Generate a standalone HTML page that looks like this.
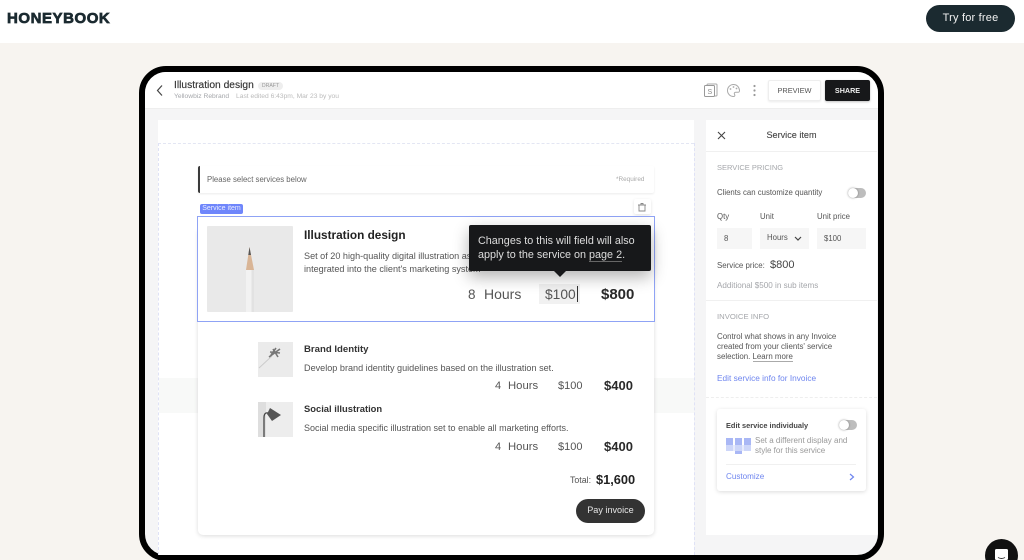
<!DOCTYPE html>
<html><head><meta charset="utf-8">
<style>
*{box-sizing:border-box;margin:0;padding:0}
html,body{width:1024px;height:560px;overflow:hidden;background:#f7f4f0;font-family:"Liberation Sans",sans-serif}
#root{position:relative;width:1024px;height:560px;overflow:hidden;background:#f7f4f0;filter:blur(.25px)}
.a{position:absolute;white-space:nowrap}
#top{left:0;top:0;width:1024px;height:43px;background:#fff}
#frame{left:139px;top:66px;width:745px;height:495px;border:6px solid #000;border-radius:27px;background:#f5f5f6;overflow:hidden}
.g{color:#555}
.l{color:#a5a7ab}
.b{color:#6f86ef}
</style></head><body>
<div id="root">
<div class="a" id="top"></div>
<div class="a" style="left:7px;top:9px;font-size:15px;line-height:20px;font-weight:bold;color:#1b2a30;letter-spacing:.55px;-webkit-text-stroke:.7px #1b2a30">HONEYBOOK</div>
<div class="a" style="left:926px;top:5px;width:89px;height:27px;border-radius:14px;background:#1b2a30;color:#f2f2f2;font-size:11px;line-height:27px;text-align:center;letter-spacing:.2px">Try for free</div>

<div class="a" id="frame"></div>
<!-- app header -->
<div class="a" style="left:145px;top:72px;width:733px;height:37px;background:#fff;border-radius:21px 21px 0 0;border-bottom:1px solid #eee"></div>
<svg class="a" style="left:155px;top:84px" width="10" height="13"><path d="M7 1.500L2.500 6.500L7 11.500" fill="none" stroke="#444" stroke-width="1.200"/></svg>
<div class="a" style="left:174px;top:79px;font-size:10.250px;line-height:13px;color:#333;-webkit-text-stroke:.15px #333">Illustration design</div>
<div class="a" style="left:258px;top:82px;width:25px;height:8px;border-radius:4px;background:#eee;color:#999;font-size:5.200px;line-height:8px;text-align:center">DRAFT</div>
<div class="a l" style="left:174px;top:92px;font-size:6.700px;line-height:9px">Yellowbiz Rebrand</div>
<div class="a" style="left:236px;top:92px;font-size:6.700px;line-height:9px;color:#bbb">Last edited 6:43pm, Mar 23 by you</div>
<svg class="a" style="left:703px;top:83px" width="16" height="15"><rect x="4" y="1" width="10" height="12" rx="1" fill="#fff" stroke="#aaa"/><rect x="1.500" y="2.500" width="10" height="11" rx="1" fill="#fff" stroke="#999"/><text x="4.500" y="11" font-size="7" fill="#888" font-family="Liberation Sans">S</text></svg>
<svg class="a" style="left:726px;top:83px" width="15" height="15"><path d="M7.500 1.500a6 6 0 1 0 0 12c1.600 0 1.600-1.300 1-2.200-.6-1 0-2 1.200-2H12c1.100 0 1.700-.8 1.500-2.100C13 3.500 10.500 1.500 7.500 1.500z" fill="#fff" stroke="#aaa"/><circle cx="4.500" cy="6" r=".9" fill="#aaa"/><circle cx="7.500" cy="4" r=".9" fill="#aaa"/><circle cx="10.500" cy="5.500" r=".9" fill="#aaa"/></svg>
<svg class="a" style="left:752px;top:84px" width="5" height="13"><circle cx="2.500" cy="2" r="1.100" fill="#999"/><circle cx="2.500" cy="6.500" r="1.100" fill="#999"/><circle cx="2.500" cy="11" r="1.100" fill="#999"/></svg>
<div class="a" style="left:768px;top:80px;width:53px;height:21px;background:#fff;border:1px solid #eee;border-radius:2px;box-shadow:0 1px 2px rgba(0,0,0,.08);color:#555;font-size:7.400px;line-height:19px;text-align:center">PREVIEW</div>
<div class="a" style="left:825px;top:80px;width:45px;height:21px;background:#17181a;border-radius:2px;box-shadow:0 1px 2px rgba(0,0,0,.25);color:#eee;font-size:7.200px;font-weight:bold;line-height:21px;text-align:center">SHARE</div>

<!-- page panel -->
<div class="a" style="left:158px;top:120px;width:536px;height:435px;background:#fff"></div>
<div class="a" style="left:158px;top:143px;width:536px;border-top:1px dashed #e3e6f3"></div>
<div class="a" style="left:158px;top:143px;height:412px;border-left:1px dashed #dfe2f6"></div>
<div class="a" style="left:694px;top:143px;height:412px;border-left:1px dashed #dfe2f6"></div>
<div class="a" style="left:159px;top:378px;width:535px;height:35px;background:#f8f9f8"></div>

<!-- select bar -->
<div class="a" style="left:198px;top:166px;width:456px;height:27px;background:#fff;border-left:2px solid #3a3a3a;border-radius:2px;box-shadow:0 1px 2px rgba(0,0,0,.08)"></div>
<div class="a" style="left:207px;top:174px;font-size:7.800px;line-height:11px;color:#666">Please select services below</div>
<div class="a" style="left:616px;top:175px;font-size:6.400px;line-height:9px;color:#aaa">*Required</div>

<div class="a" style="left:200px;top:204px;width:43px;height:10px;background:#6f86fb;border-radius:2px;color:#e8ecff;font-size:7px;line-height:10px;text-align:center">Service item</div>
<div class="a" style="left:634px;top:199px;width:17px;height:15px;background:#fff;border-radius:2px;box-shadow:0 1px 3px rgba(0,0,0,.12)"></div>
<svg class="a" style="left:637px;top:202px" width="10" height="10"><path d="M2 3h6v6H2zM1 3h8M4 3V1.500h2V3" fill="none" stroke="#888" stroke-width=".9"/></svg>

<!-- card -->
<div class="a" style="left:198px;top:230px;width:456px;height:305px;background:#fff;border-radius:0 0 5px 5px;box-shadow:0 1px 4px rgba(0,0,0,.14)"></div>
<div class="a" style="left:197px;top:216px;width:458px;height:106px;background:#fff;border:1px solid #8fa3f5"></div>
<svg class="a" style="left:207px;top:226px" width="86" height="86"><rect width="86" height="86" fill="#e9e9e9" rx="1"/><rect x="39" y="44" width="8" height="42" fill="#f2f2f2"/><rect x="44.500" y="44" width="2.500" height="42" fill="#e2e2e2"/><path d="M39 44L42.500 21L47 44z" fill="#d9b596"/><path d="M41.300 29L42.500 21L44 29z" fill="#555"/></svg>
<div class="a" style="left:304px;top:228px;font-size:11.800px;line-height:14px;font-weight:bold;color:#222">Illustration design</div>
<div class="a g" style="left:304px;top:250px;font-size:9.100px;line-height:13px">Set of 20 high-quality digital illustration as</div>
<div class="a g" style="left:304px;top:263px;font-size:9.100px;line-height:13px">integrated into the client's marketing system</div>
<div class="a g" style="left:468px;top:287px;font-size:13.500px;line-height:15px">8</div>
<div class="a g" style="left:484px;top:287px;font-size:14px;line-height:15px">Hours</div>
<div class="a" style="left:539px;top:284px;width:41px;height:20px;background:#f1f1f1"></div>
<div class="a g" style="left:545px;top:287px;font-size:13.800px;line-height:15px">$100</div>
<div class="a" style="left:577px;top:286px;width:1px;height:16px;background:#333"></div>
<div class="a" style="left:601px;top:287px;font-size:15px;line-height:15px;font-weight:bold;color:#2a2a2a">$800</div>

<!-- tooltip -->
<div class="a" style="left:469px;top:225px;width:182px;height:46px;background:#17181a;border-radius:2px;box-shadow:0 6px 16px rgba(0,0,0,.3)"></div>
<div class="a" style="left:554px;top:271px;width:0;height:0;border-left:6px solid transparent;border-right:6px solid transparent;border-top:6px solid #17181a"></div>
<div class="a" style="left:478px;top:234px;font-size:10.800px;line-height:14px;color:#ddd">Changes to this will field will also<br>apply to the service on <span style="border-bottom:1px solid #666">page 2</span>.</div>

<!-- sub items -->
<svg class="a" style="left:258px;top:342px" width="35" height="35"><rect width="35" height="35" fill="#ebebeb"/><path d="M1 26L14 14" stroke="#ccc" fill="none"/><path d="M11 15L22 7M12 10L22 11M15 7L20 15M13 13L18 6" stroke="#777" stroke-width="1.600" fill="none"/></svg>
<div class="a" style="left:304px;top:344px;font-size:9.600px;line-height:12px;font-weight:bold;color:#333">Brand Identity</div>
<div class="a g" style="left:304px;top:362px;font-size:9.100px;line-height:12px">Develop brand identity guidelines based on the illustration set.</div>
<div class="a g" style="left:495px;top:379px;font-size:11px;line-height:14px">4</div>
<div class="a g" style="left:508px;top:379px;font-size:11.300px;line-height:14px">Hours</div>
<div class="a g" style="left:558px;top:379px;font-size:11px;line-height:14px">$100</div>
<div class="a" style="left:604px;top:379px;font-size:13px;line-height:14px;font-weight:bold;color:#2a2a2a">$400</div>

<svg class="a" style="left:258px;top:402px" width="35" height="35"><rect width="35" height="35" fill="#ededed"/><rect width="8" height="35" fill="#dedede"/><path d="M6 35V16Q6 10 10 11" stroke="#444" stroke-width="1.300" fill="none"/><path d="M12 6L23 13L14 19L9 12z" fill="#555"/></svg>
<div class="a" style="left:304px;top:403px;font-size:9.400px;line-height:12px;font-weight:bold;color:#333">Social illustration</div>
<div class="a g" style="left:304px;top:422px;font-size:9px;line-height:12px">Social media specific illustration set to enable all marketing efforts.</div>
<div class="a g" style="left:495px;top:440px;font-size:11px;line-height:14px">4</div>
<div class="a g" style="left:508px;top:440px;font-size:11.300px;line-height:14px">Hours</div>
<div class="a g" style="left:558px;top:440px;font-size:11px;line-height:14px">$100</div>
<div class="a" style="left:604px;top:440px;font-size:13px;line-height:14px;font-weight:bold;color:#2a2a2a">$400</div>

<div class="a g" style="left:570px;top:474px;font-size:8.800px;line-height:12px">Total:</div>
<div class="a" style="left:596px;top:473px;font-size:12.800px;line-height:14px;font-weight:bold;color:#222">$1,600</div>
<div class="a" style="left:576px;top:499px;width:69px;height:24px;border-radius:12px;background:#333;color:#e6e6e6;font-size:9.100px;line-height:23px;text-align:center">Pay invoice</div>

<!-- right panel -->
<div class="a" style="left:706px;top:120px;width:171px;height:415px;background:#fff"></div>
<svg class="a" style="left:717px;top:131px" width="9" height="9"><path d="M1 1L8 8M8 1L1 8" stroke="#444" stroke-width="1.100"/></svg>
<div class="a" style="left:706px;top:130px;width:171px;text-align:center;font-size:9.100px;line-height:11px;color:#444;-webkit-text-stroke:.1px #444">Service item</div>
<div class="a" style="left:706px;top:151px;width:171px;border-top:1px solid #f0f0f0"></div>
<div class="a l" style="left:717px;top:163px;font-size:7.500px;line-height:10px">SERVICE PRICING</div>
<div class="a g" style="left:717px;top:188px;font-size:7.800px;line-height:10px">Clients can customize quantity</div>
<div class="a" style="left:848px;top:188px;width:18px;height:10px;border-radius:5px;background:#bdbdbd"></div>
<div class="a" style="left:848px;top:188px;width:10px;height:10px;border-radius:5px;background:#fff;box-shadow:0 0 2px rgba(0,0,0,.4)"></div>
<div class="a g" style="left:717px;top:212px;font-size:7.800px;line-height:10px">Qty</div>
<div class="a g" style="left:760px;top:212px;font-size:7.800px;line-height:10px">Unit</div>
<div class="a g" style="left:817px;top:212px;font-size:7.800px;line-height:10px">Unit price</div>
<div class="a" style="left:717px;top:228px;width:35px;height:21px;background:#f6f6f6"></div>
<div class="a" style="left:760px;top:228px;width:49px;height:21px;background:#f6f6f6"></div>
<div class="a" style="left:817px;top:228px;width:49px;height:21px;background:#f6f6f6"></div>
<div class="a g" style="left:724px;top:233px;font-size:7.800px;line-height:11px">8</div>
<div class="a g" style="left:767px;top:232px;font-size:7.800px;line-height:11px">Hours</div>
<svg class="a" style="left:794px;top:236px" width="8" height="6"><path d="M1 1L4 4L7 1" fill="none" stroke="#444" stroke-width="1.200"/></svg>
<div class="a g" style="left:824px;top:233px;font-size:7.800px;line-height:11px">$100</div>
<div class="a g" style="left:717px;top:260px;font-size:7.900px;line-height:11px">Service price:</div>
<div class="a" style="left:770px;top:258px;font-size:11px;line-height:14px;color:#444">$800</div>
<div class="a l" style="left:717px;top:281px;font-size:8.100px;line-height:10px">Additional $500 in sub items</div>
<div class="a" style="left:706px;top:300px;width:171px;border-top:1px solid #f0f0f0"></div>
<div class="a l" style="left:717px;top:312px;font-size:7.700px;line-height:10px">INVOICE INFO</div>
<div class="a g" style="left:717px;top:332px;font-size:7.900px;line-height:10.200px">Control what shows in any Invoice<br>created from your clients' service<br>selection. <span style="border-bottom:1px solid #aaa">Learn more</span></div>
<div class="a b" style="left:717px;top:373px;font-size:8.300px;line-height:10px">Edit service info for Invoice</div>
<div class="a" style="left:706px;top:397px;width:171px;border-top:1px dashed #eee"></div>
<div class="a" style="left:717px;top:409px;width:149px;height:82px;background:#fff;border-radius:3px;box-shadow:0 1px 4px rgba(0,0,0,.14)"></div>
<div class="a" style="left:726px;top:420px;font-size:7.400px;line-height:11px;font-weight:bold;color:#444">Edit service individualy</div>
<div class="a" style="left:839px;top:420px;width:18px;height:10px;border-radius:5px;background:#bdbdbd"></div>
<div class="a" style="left:839px;top:420px;width:10px;height:10px;border-radius:5px;background:#fff;box-shadow:0 0 2px rgba(0,0,0,.4)"></div>
<svg class="a" style="left:726px;top:438px" width="25" height="16"><rect width="7" height="13" fill="#a9b7f5"/><rect x="9" width="7" height="16" fill="#a9b7f5"/><rect x="18" width="7" height="13" fill="#a9b7f5"/><rect y="7" width="25" height="6" fill="#dde3fb" opacity=".7"/></svg>
<div class="a" style="left:755px;top:436px;font-size:8px;line-height:10.300px;color:#999">Set a different display and<br>style for this service</div>
<div class="a" style="left:726px;top:464px;width:130px;border-top:1px solid #f0f0f0"></div>
<div class="a b" style="left:726px;top:472px;font-size:8.100px;line-height:10px">Customize</div>
<svg class="a" style="left:849px;top:473px" width="6" height="8"><path d="M1 1L4.500 4L1 7" fill="none" stroke="#6f86ef" stroke-width="1.200"/></svg>

<!-- chat -->
<div class="a" style="left:985px;top:539px;width:33px;height:33px;border-radius:50%;background:#111"></div>
<svg class="a" style="left:995px;top:549px" width="13" height="11"><rect width="13" height="11" rx="1.500" fill="#fff"/><path d="M3 8.500Q6.500 10.500 10 8.500" fill="none" stroke="#333" stroke-width=".9"/></svg>
</div>
</body></html>
